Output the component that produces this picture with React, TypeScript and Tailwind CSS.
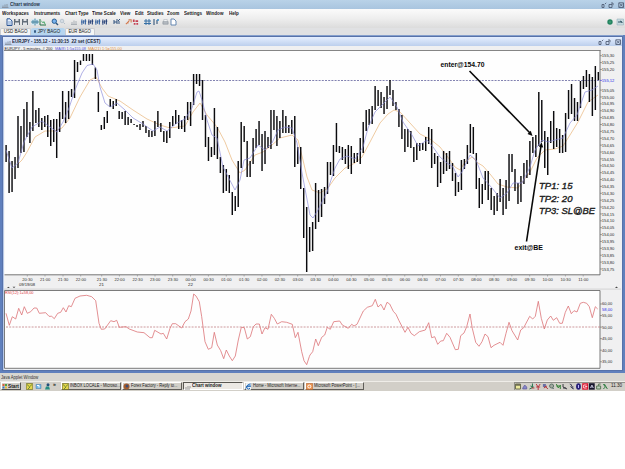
import React from "react";

const BARS: number[][] = [
  [145,162],[151,193],[161,192],[157,179],[116,168],[126,153],[109,152],[102,137],[122,143],[91,131],
  [110,123],[108,127],[118,130],[116,127],[115,137],[120,146],[119,142],[119,158],[112,132],[91,119],
  [102,123],[91,119],[89,97],[60,98],[62,72],[60.5,65],[54,61],[54,61],[54,61],[54,65],
  [67.5,79],[92,112],[125,130],[117,129],[111,123],[99,107],[101,109],[99,106],[111,119],[112,119],
  [111,125],[117,125],[119,123],[124,125],[125,127],[124,130],[121,127],[126,133],[130,137],[131,137],
  [121,136],[111,127],[123,132],[131,142],[131,143],[122,138],[116,126],[110,124],[115,129],[120,129],
  [116,132],[102,120],[102,126],[74,105],[74,84],[74,86],[80,120],[115,147],[137,161],[147,157],
  [108,155],[127,159],[157,173],[165,193],[169,191],[175,193],[192,215],[196,211],[161,207],[122,168],
  [126,142],[141,177],[161,177],[138,164],[129,148],[121,145],[134,171],[131,164],[137,148],[110,149],
  [110,130],[116,146],[121,138],[110,133],[116,133],[125,133],[120,134],[116,167],[147,164],[147,189],
  [188,238],[207,272],[227,252],[222,251],[183,229],[190,222],[189,217],[187,204],[162,194],[162,175],
  [145,176],[123,152],[146,153],[147,160],[149,164],[145,169],[146,174],[153,163],[153,162],[138,164],
  [122,153],[110,131],[109,125],[106,124],[86,110],[90,106],[92,108],[97,114],[86,109],[80,95],
  [90,106],[102,110],[109,127],[115,139],[129,152],[129,147],[131,148],[147,162],[143,160],[143,151],
  [143,150],[137,151],[127,144],[129,168],[153,164],[156,187],[162,183],[151,174],[153,171],[151,169],
  [163,181],[173,196],[182,192],[160,190],[159,169],[145,164],[124,153],[127,154],[153,189],[178,208],
  [184,204],[171,190],[171,200],[188,210],[196,215],[193,211],[179,202],[188,215],[180,209],[154,201],
  [154,172],[169,191],[183,204],[176,202],[163,184],[160,178],[141,175],[137,153],[135,157],[92,146],
  [100,142],[131,168],[137,175],[121,143],[111,149],[128,147],[129,153],[135,153],[113,152],[90,119],
  [84,114],[98,121],[102,121],[81,108],[76,89],[70,87],[74,102],[77,116],[66,110],[72,80],
];

const FAST =
  "6,150 12,168 18,163 24,142 32,127 42,121 50,127 57,132 63,122 69,108 75,90 82,73 87,65.5 93,64 97,70 100,87 105,103 110,107 117,103 125,110 133,118 143,124 153,131 160,127 167,131 177,123 185,119 192,108 197,92 199,91 202,100 207,120 212,135 217,138 223,167 235,190 240,180 244,160 250,158 258,145 265,150 272,143 278,130 285,127 292,128 297,143 302,173 310,215 313,218 318,210 327,192 335,168 340,159 347,156 355,159 363,147 368,128 375,112 382,105 390,97 397,107 403,122 412,135 418,146 427,140 433,147 440,157 447,163 453,167 458,177 462,172 470,155 476,160 483,178 492,188 500,198 507,193 513,183 522,183 530,167 535,150 542,140 548,142 555,140 563,138 570,123 577,115 585,92 592,90 598,86";
const SLOW =
  "18,164 22,160 27,152 35,137 45,131 55,131 62,128 70,118 80,97 90,80 96,77 102,88 108,96 120,101 133,110 147,119 160,125 170,128 185,126 193,112 200,103 207,115 217,127 225,142 232,160 240,173 245,170 255,155 263,152 272,145 280,138 292,135 298,140 303,160 307,177 312,190 320,193 328,188 335,178 345,168 355,163 362,157 370,142 380,123 388,114 394,110 400,112 410,123 420,134 430,139 440,147 450,160 455,167 460,170 465,162 472,157 478,163 483,166 490,174 498,184 507,187 518,188 523,181 530,172 537,158 545,150 555,149 563,146 570,135 578,122 588,102 598,95";

const RSI_LEFT =
  "18,100 28,136 37,110 47,117 56,85 65,105 73,80 82,100 92,95 102,84 110,84 118,100 137,98 147,109 155,109 163,116 173,100 182,97 190,83 198,96 206,77 214,80 225,55 240,48 260,46 275,50 287,62 297,130 304,148 314,147 332,122 342,125 350,121 358,142 378,140 388,147 412,156 432,158 450,173 457,173 464,151 483,162 490,160 500,177 510,145 517,131 527,131 545,144 555,125 565,117 573,93 581,42 588,48 598,65 605,110 615,185 625,208 635,203 643,157 652,195 662,212 671,236 679,210 688,228 697,242 706,228 715,180 724,142 733,143 742,177 751,170 760,140 768,132 778,132 786,162 795,143 804,148 814,103 823,115 832,132 845,125 860,127 877,133 886,173 894,157 905,215 912,242 920,254 928,230";
const RSI_RIGHT =
  "0,225 8,215 17,177 25,197 35,172 44,165 52,142 61,148 71,125 89,123 97,135 115,145 125,133 132,138 141,133 160,93 172,82 187,77 196,58 204,81 213,73 222,90 231,67 239,72 250,94 258,103 267,122 285,157 294,142 303,160 313,167 328,155 346,150 356,128 365,173 374,170 383,193 392,183 400,182 410,160 420,172 436,209 445,208 452,167 462,159 470,140 480,102 487,145 497,187 507,199 516,185 525,162 534,170 543,203 552,196 570,187 579,196 588,160 597,127 606,152 623,180 632,150 641,143 659,109 668,117 676,109 685,64 694,115 703,147 712,120 722,108 730,121 740,113 749,130 757,130 766,97 775,78 784,101 792,92 801,96 811,70 820,67 830,70 838,80 847,113 856,80 863,87";
const scalePoints = (s: string, dx: number) =>
  s.split(" ").map((p) => {
    const [x, y] = p.split(",").map(Number);
    return `${(x / 3 + dx).toFixed(1)},${(y / 3 + 280).toFixed(1)}`;
  }).join(" ");
const RSI = scalePoints(RSI_LEFT, 0) + " " + scalePoints(RSI_RIGHT, 310);

const PRICES = Array.from({ length: 32 }, (_, i) => 15530 - i * 5)
  .map((p, i) => ({ label: `${Math.floor(p / 100)},${String(p % 100).padStart(2, "0")}`, y: 55.7 + i * 6.88 }))
  .filter((_, i) => i !== 3 && i !== 4);

const TIMES: [string, number][] = [
  ["20:30", 27.3], ["21:00", 45], ["21:30", 63], ["22:00", 80.7], ["21:30", 101.7], ["22:00", 119.4], ["22:30", 137.4], ["23:00", 155],
  ...Array.from({ length: 24 }, (_, i): [string, number] => {
    const m = (46 + i) % 48;
    return [`${String(Math.floor(m / 2)).padStart(2, "0")}:${m % 2 ? "30" : "00"}`, 154.85 + i * 17.85];
  }).slice(1),
  ["11:00", 583.2],
];

const MENUS: [string, string][] = [
  ["Workspaces", "w-[32px]"], ["Instruments", "w-[31px]"], ["Chart Type", "w-[27px]"], ["Time Scale", "w-[28px]"],
  ["View", "w-[15px]"], ["Edit", "w-[12px]"], ["Studies", "w-[20px]"], ["Zoom", "w-[17px]"],
  ["Settings", "w-[22px]"], ["Window", "w-[23px]"], ["Help", "w-[12px]"],
];

function WinButtons() {
  return (
    <svg width="24" height="8" viewBox="0 0 24 8" fill="none" stroke="#46536b" strokeWidth="0.8">
      <path d="M1 6.5V3.5h2v3zM4 3l1.2-1.2" />
      <path d="M8 3.5h3v3H8zM10 2h2v2.2" />
      <path d="M17.8 1.8h4.7v4.7h-4.7zM18.8 2.6l3 3M21.8 2.6l-3 3" />
    </svg>
  );
}

function ChartGlyph() {
  return (
    <svg width="7" height="6" viewBox="0 0 7 6" className="shrink-0">
      <path d="M0 5.5h6.5M1 5V3.5M3 5V2.5M5 5V2" stroke="#87919e" strokeWidth="0.9" fill="none" />
    </svg>
  );
}

function Toolbar() {
  const candle = (k: number) => (
    <path d="M1 1v6M3 2v4M5 .8v6M0 4h2M4 3h2" stroke={k % 2 ? "#243f77" : "#315f9d"} strokeWidth="1.2" fill="none" />
  );
  const icon = (body: React.ReactNode, cls: string) => (
    <svg viewBox="0 0 8 8" className={`h-[8px] shrink-0 ${cls}`}>{body}</svg>
  );
  const save = <><path d="M1 1h6v6H1z" fill="#626d78" /><path d="M2.5 1h3v2h-3zM2 4.5h4V7H2z" fill="#e1e4e8" /></>;
  return (
    <div className="flex h-[9px] items-center pl-[5px]">
      {icon(<><path d="M2 .8h3L7 3v4.5H2z" fill="#e9f3ff" stroke="#2c5594" /><path d="M3 4h3M3 6h3" stroke="#557db5" strokeWidth=".7" /></>, "w-[8px]")}
      {icon(save, "w-[8px]")}
      {icon(save, "w-[8px] mr-[2px]")}
      {icon(<><path d="M.5 1h7v6h-7z" fill="#d5eaf6" /><path d="M0 4h8M4 .5v7M2 2v4M6 2v4" stroke="#2b7190" strokeWidth=".8" /></>, "w-[8px]")}
      {icon(<><path d="M1 1v6h6" stroke="#257345" fill="none" /><path d="M1.5 2l2 3L5 3l2 4z" fill="#38a35b" /></>, "w-[8px] mr-[4px]")}
      {icon(<><circle cx="3.3" cy="3.2" r="2.2" fill="#79b3ed" stroke="#2c6296" /><path d="M5 5l2 2" stroke="#2c557c" strokeWidth="1.4" /></>, "w-[8px]")}
      {icon(<><circle cx="3" cy="3" r="1.8" fill="#d4dce4" stroke="#b3bfca" strokeWidth=".8" /><path d="M4.5 4.5L6 6" stroke="#b3bfca" /></>, "w-[8px] mr-[3px]")}
      {icon(<path d="M1 6.5h6M2 6V4M4 6V2.5M6 6V3" stroke="#aab0b6" />, "w-[8px] mr-[3px]")}
      {[0, 1, 2, 3].map((k) => <React.Fragment key={k}>{icon(candle(k), "w-[7px]")}</React.Fragment>)}
      <span className="w-[4px]" />
      {icon(<path d="M1 2v4M1 4h3M4 1v5M7 1L5 3M6 3v3" stroke="#30527e" fill="none" />, "w-[8px] mr-[4px]")}
      {icon(<path d="M1 6.5l4-4M4 1.5h3v3M2 5h2" stroke="#d3774b" fill="none" strokeWidth="1.2" />, "w-[7px]")}
      {icon(<path d="M1 1h2v3H1zM4 2h3v2H4zM2 5h2v2H2zM5 5h2v2H5z" fill="#c54052" />, "w-[7px] mr-[5px]")}
      {icon(<path d="M2 1v6M5 1v6M0 3h7M0 5.5h7" stroke="#3670a6" />, "w-[8px]")}
      {icon(<><path d="M2 1v6M5 2v4" stroke="#20466f" /><circle cx="6" cy="2" r="1" fill="#388bc9" /></>, "w-[8px] mr-[2px]")}
      {icon(<><path d="M1 3.5h6v3H1z" fill="#b5bbc2" stroke="#7c858e" strokeWidth=".6" /><path d="M2 1.3h4v2H2z" fill="#fff" stroke="#8d96a0" strokeWidth=".5" /></>, "w-[7px]")}
      {icon(<path d="M2 1h3l2 2v4H2z" fill="#fff" stroke="#577eaa" strokeWidth=".9" />, "w-[8px]")}
      <span className="flex-1" />
      <svg width="21" height="8" viewBox="0 0 21 8">
        <circle cx="6" cy="4" r="2.7" fill="#258561" /><circle cx="6" cy="4" r=".8" fill="#54b18a" />
        <path d="M13 1h6.5v6H13z" fill="#c6dadf" stroke="#8cabb6" strokeWidth=".5" /><path d="M14 4h4M16 3l2 1v1" stroke="#335867" fill="none" />
      </svg>
    </div>
  );
}

function ChartCanvas() {
  return (
    <svg width="617" height="323.5" viewBox="4 46 617 323.5" className="block overflow-visible font-['Liberation_Sans',sans-serif]">
      <rect x="4" y="46" width="617" height="323.5" fill="#f0f0f1" />
      <text x="4.5" y="49.8" fontSize="4.3" fill="#1b1b28" textLength="48" lengthAdjust="spacingAndGlyphs">EURJPY , 5 minutes, # 200</text>
      <text x="55" y="49.8" fontSize="4.3" fill="#5757dc" textLength="31" lengthAdjust="spacingAndGlyphs">MA(8) 1;5=155,08</text>
      <text x="88" y="49.8" fontSize="4.3" fill="#e3913f" textLength="34" lengthAdjust="spacingAndGlyphs">MA(21) 1;5=155,00</text>
      <rect x="4.5" y="51" width="595.5" height="224" fill="#fefefe" />
      <path d="M4 50.5H600.5" stroke="#858585" fill="none" />
      <path d="M600 50V275M4.5 274.8H600" stroke="#747474" strokeWidth="1" fill="none" />
      <path d="M5 80.5H600" stroke="#7474a8" strokeWidth="0.9" strokeDasharray="2 1.2" />
      <polyline points={SLOW} fill="none" stroke="#e9ba83" strokeWidth="0.75" />
      <g stroke="#0b0b0e" strokeWidth="1.45">
        {BARS.map(([h, l], i) => <path key={i} d={`M${(6.1 + i * 2.976).toFixed(2)} ${h}V${l}`} />)}
      </g>
      <polyline points={FAST} fill="none" stroke="#8787d8" strokeWidth="0.65" />
      {PRICES.map((p) => (
        <g key={p.label}>
          <path d={`M600 ${p.y}h2`} stroke="#666" strokeWidth=".6" />
          <text x="601.8" y={p.y + 1.6} fontSize="4.4" fill="#292929" textLength="12.6" lengthAdjust="spacingAndGlyphs">{p.label}</text>
        </g>
      ))}
      <path d="M600 80.4h2" stroke="#3333dd" strokeWidth=".6" />
      <text x="601.8" y="82" fontSize="4.4" fill="#2525e8" textLength="12.6" lengthAdjust="spacingAndGlyphs">155,12</text>
      {TIMES.map(([t, x], i) => (
        <g key={i}>
          <path d={`M${x} 275v1.5`} stroke="#777" strokeWidth=".5" />
          <text x={x - 5} y="280.6" fontSize="4.4" fill="#303030" textLength="10.3" lengthAdjust="spacingAndGlyphs">{t}</text>
        </g>
      ))}
      <text x="19" y="285.7" fontSize="4.4" fill="#222" textLength="16" lengthAdjust="spacingAndGlyphs">09/19/08</text>
      <text x="99" y="285.7" fontSize="4.4" fill="#222">21</text>
      <text x="188" y="285.7" fontSize="4.4" fill="#222">22</text>
      <path d="M7 288l1.4-1.2 1.4 1.2M12.5 286.8l1.5 1.2 1.5-1.2M615 288l1.5-1.5 1.5 1.5" fill="#464646" />
      <path d="M4 289.1H621" stroke="#c9c9c9" strokeWidth=".7" />
      <path d="M4.5 290.5H600V368.3H4.5z" stroke="#6c6c6c" strokeWidth=".9" fill="#fefefe" />
      <text x="5" y="294.2" fontSize="4.4" fill="#da3d46" textLength="28.5" lengthAdjust="spacingAndGlyphs">RSI(12);1=58,00</text>
      <path d="M6 327H600" stroke="#bd7a7d" strokeWidth=".75" strokeDasharray="2 1.2" />
      <polyline points={RSI} fill="none" stroke="#dc7377" strokeWidth="0.8" />
      {[60, 55, 50, 45, 40, 35].map((v, i) => (
        <g key={v}>
          <path d={`M600 ${304 + i * 11.55}h2`} stroke="#666" strokeWidth=".6" />
          <text x="602" y={305.4 + i * 11.55} fontSize="4.4" fill="#292929" textLength="10.2" lengthAdjust="spacingAndGlyphs">{v},00</text>
        </g>
      ))}
      <text x="602" y="310.5" fontSize="4.4" fill="#2525e8" textLength="10.2" lengthAdjust="spacingAndGlyphs">58,00</text>
      <path d="M469.5 71L530 133" stroke="#080808" strokeWidth="1.6" />
      <path d="M532.5 136l-5-2 3.3-3.2z" fill="#080808" />
      <path d="M526.5 241.5L541 146" stroke="#080808" strokeWidth="1.6" />
      <path d="M541.5 142l1.7 5.5-4.2-.6z" fill="#080808" />
      <g fill="#080808" fontWeight="bold">
        <text x="440.5" y="66.8" fontSize="6.8" textLength="44" lengthAdjust="spacingAndGlyphs">enter@154.70</text>
        <text x="514.5" y="250.4" fontSize="6.6" textLength="28.5" lengthAdjust="spacingAndGlyphs">exit@BE</text>
      </g>
      <g fill="#202020" stroke="#202020" strokeWidth=".35" fontStyle="italic" fontSize="8.8">
        <text x="539" y="189.3" textLength="33.5" lengthAdjust="spacingAndGlyphs">TP1: 15</text>
        <text x="539" y="201.7" textLength="33.5" lengthAdjust="spacingAndGlyphs">TP2: 20</text>
        <text x="539" y="214" textLength="56" lengthAdjust="spacingAndGlyphs">TP3: SL@BE</text>
      </g>
    </svg>
  );
}

function AppIcon({ kind }: { kind: string }) {
  return (
    <svg width="7" height="7" viewBox="0 0 7 7" className="shrink-0">
      {kind === "mail" && <><path d="M.3.5h6.4v6H.3z" fill="#e4d54b" stroke="#60601d" strokeWidth=".6" /><path d="M1 1.5l2.5 2.3L6 1.5M2 6l2-2" stroke="#54782d" strokeWidth=".8" fill="none" /></>}
      {kind === "fox" && <><circle cx="3.5" cy="3.5" r="3" fill="#a75e2c" /><circle cx="4" cy="3" r="1.5" fill="#3d4d76" /></>}
      {kind === "ie" && <><path d="M1 .3h5v6.4H1z" fill="#f5fbff" /><path d="M1.3 3.6h4.3a2 2 0 1 0-.6 1.7M5.8 1c-1.5-.4-4 1.5-5 4.7" fill="none" stroke="#286db9" strokeWidth="1" /></>}
      {kind === "ppt" && <><path d="M.3.5h6.4v6H.3z" fill="#ed9551" stroke="#b05d24" strokeWidth=".5" /><circle cx="3.3" cy="3.5" r="1.5" fill="none" stroke="#fff" /></>}
      {kind === "desk" && <><path d="M1 1.5h5v4H1z" fill="#73b8e7" stroke="#4578a9" strokeWidth=".5" /><path d="M2 2.5h2v2" stroke="#fff" fill="none" /></>}
      {kind === "user" && <><circle cx="4" cy="1.8" r="1.5" fill="#244e7b" /><path d="M1 6.5l1-3h3l1 3z" fill="#278d82" /></>}
      {kind === "chart" && <path d="M1 6h5M2 5V4M4 5V3M6 5V3" stroke="#999" />}
    </svg>
  );
}

const TASKS: [string, string, string][] = [
  ["mail", "INBOX LOCALE - Microso...", "w-[60px]"],
  ["fox", "Forex Factory - Reply to...", "w-[60px]"],
  ["chart", "Chart window", "w-[60px]"],
  ["ie", "Home - Microsoft Interne...", "w-[60px]"],
  ["ppt", "Microsoft PowerPoint - [...", "w-[59px]"],
];

function Tray() {
  const s = (k: number, body: React.ReactNode) => <g key={k} transform={`translate(${k * 6.72} 0)`}>{body}</g>;
  return (
    <svg width="94" height="7" viewBox="0 0 94 7" fill="none" strokeWidth="1" className="shrink-0">
      {s(0, <><path d="M.5 1h5v5h-5z" fill="#ece99d" stroke="#6e7050" /><path d="M1 2h4" stroke="#333" /></>)}
      {s(1, <><path d="M1 5l2-3 2 2v2H1z" fill="#8786c9" stroke="#524f91" strokeWidth=".6" /></>)}
      {s(2, <><path d="M4 .5v3M2 3l3 1-4 2" stroke="#23784f" /><path d="M3 5h3" stroke="#b44" /></>)}
      {s(3, <path d="M1 1l2 3 2-3M3 3v4M1 4h4" stroke="#bd3b43" />)}
      {s(4, <><path d="M1 1h3v3H1z" fill="#6870a5" /><path d="M3 3l3 3M2 5l3-2" stroke="#b3343c" /></>)}
      {s(5, <><circle cx="3" cy="3" r="2" fill="#a5aaa2" stroke="#5c7367" /><path d="M4 5l1 1" stroke="#345" /></>)}
      {s(6, <path d="M1 1l2 4 2-3v4M1 3h3" stroke="#38833a" />)}
      {s(7, <path d="M1 1v3l4 2M1 5h3" stroke="#3a3c42" />)}
      {s(8, <path d="M1 1l2 1-1 2 3 2M4 3v3" stroke="#454660" />)}
      {s(9, <><ellipse cx="3" cy="3.5" rx="2.4" ry="3.2" fill="#292178" /><path d="M3 2v3" stroke="#c0b8ff" /></>)}
      {s(10, <><path d="M0 .2h6v6.5H0z" fill="#db1731" /><path d="M4.5 2h-3v3h3M3 3.5h2" stroke="#ffd4d9" /></>)}
      {s(11, <><path d="M0 .2h5.8v6.5H0z" fill="#17162c" /><path d="M1.5 5L3 2l1.5 3M2 4h2" stroke="#dadaf0" strokeWidth=".8" /></>)}
      {s(12, <><path d="M1 3h4v3H1z" fill="#bfd1bf" stroke="#577957" /><path d="M3 3V1h2" stroke="#577957" /></>)}
      {s(13, <path d="M1 1l2 3-2 2M2 1l3 5" stroke="#318044" />)}
    </svg>
  );
}

export default function App() {
  return (
    <div className="h-[469px] w-[625px] overflow-hidden bg-white font-['Liberation_Sans',sans-serif] text-[5.2px] leading-none whitespace-nowrap text-[#202020]">
      <header className="flex h-[9px] items-center bg-gradient-to-b from-[#b9d2e8] to-[#a9c5df] pl-[2px]">
        <ChartGlyph />
        <b className="ml-[1px] origin-left scale-x-[0.86] text-[5.3px] text-[#26364b]">Chart window</b>
        <span className="flex-1" />
        <WinButtons />
      </header>

      <div className="h-[18.5px] bg-gradient-to-b from-[#fbfbfb] via-[#eeeeee] to-[#dcdcdc]">
        <nav className="flex h-[8px] items-center pt-[0.5px] pl-[2px] text-[5.2px] font-bold">
          {MENUS.map(([label, width]) => (
            <span key={label} className={`shrink-0 ${width}`}>
              <span className="inline-block origin-left scale-x-[0.88]">{label}</span>
            </span>
          ))}
        </nav>
        <Toolbar />
      </div>

      <div className="flex h-[7.5px] items-end bg-[#e0e1e3] text-[5.2px]">
        <span className="flex h-[7px] w-[31px] items-center justify-center rounded-t-[2px] border border-b-0 border-[#c9ccd0] bg-[#f5f5f5]"><span className="scale-x-[0.87]">USD BAGO</span></span>
        <span className="flex h-[7.5px] w-[34px] items-center justify-center rounded-t-[2px] bg-[#b6d5ef]"><i className="size-[2.5px] rounded-full bg-[#375e87]" /><span className="scale-x-[0.87]">JPY BAGO</span></span>
        <span className="flex h-[7px] w-[30px] items-center justify-center rounded-t-[2px] border border-b-0 border-[#c9ccd0] bg-[#f5f5f5]"><span className="scale-x-[0.82]">EUR BAGO</span></span>
      </div>

      <main className="h-[337.5px] border-r-[2px] border-b-[2px] border-l-[2px] border-[#6080bd] bg-[#86a0cd] pt-[1px]">
        <section className="h-[334.5px] border border-[#5772aa] bg-[#edf0f5]">
          <div className="flex h-[9px] items-center bg-gradient-to-b from-[#e5efff] to-[#bdcfed] pl-[2px] text-[5.15px] font-bold">
            <ChartGlyph />
            <span className="origin-left scale-x-[0.87] text-[#202839]">EURJPY - 155,12 - 11:30:15&nbsp; 22 set (CEST)</span>
            <span className="flex-1" />
            <WinButtons />
          </div>
          <div className="border-l-[1px] border-[#b8c9e7]"><ChartCanvas /></div>
        </section>
      </main>

      <div className="flex h-[8.5px] items-center bg-[#d8d6d1] pt-[1px] pl-[1px] text-[5px] text-[#333]"><span className="origin-left scale-x-[0.83]">Java Applet Window</span></div>
      <footer className="flex h-[9.5px] items-center border-t border-[#efede8] bg-[#d2cfc8]">
        <div className="ml-[1px] flex h-[8px] w-[20px] items-center border border-t-white border-r-[#55534f] border-b-[#55534f] border-l-white text-[5.2px] font-bold">
          <svg width="6" height="6" viewBox="0 0 6 6" className="shrink-0"><path d="M.5 1h2v2h-2z" fill="#d95f38" /><path d="M3 1h2v2H3z" fill="#4fa143" /><path d="M.5 3.5h2v2h-2z" fill="#3974bc" /><path d="M3 3.5h2v2H3z" fill="#e1bd36" /></svg>
          <span className="origin-left scale-x-[0.92]">Start</span>
        </div>
        <div className="flex w-[40px] items-center gap-[2px] pl-[5px]">
          <AppIcon kind="mail" /><AppIcon kind="desk" /><AppIcon kind="user" /><b className="pb-[3px]">»</b>
        </div>
        <div className="flex gap-[1px]">
          {TASKS.map(([kind, label, width]) => (
            <div key={label} className={`flex h-[8px] items-center border text-[4.9px] ${width} ${kind === "chart" ? "border-t-[#595752] border-r-white border-b-white border-l-[#595752] bg-[#ece9e4] font-bold" : "border-t-white border-r-[#605e59] border-b-[#605e59] border-l-white"}`}>
              <AppIcon kind={kind} />
              <span className={`ml-[1px] shrink-0 origin-left ${kind === "chart" ? "scale-x-[0.92]" : "scale-x-[0.82]"}`}>{label}</span>
            </div>
          ))}
        </div>
        <div className="ml-auto flex h-[8px] w-[111px] items-center border-t border-l border-[#92908b]">
          <Tray /><span className="ml-[2px] text-[4.6px]">11.30</span>
        </div>
      </footer>
    </div>
  );
}
